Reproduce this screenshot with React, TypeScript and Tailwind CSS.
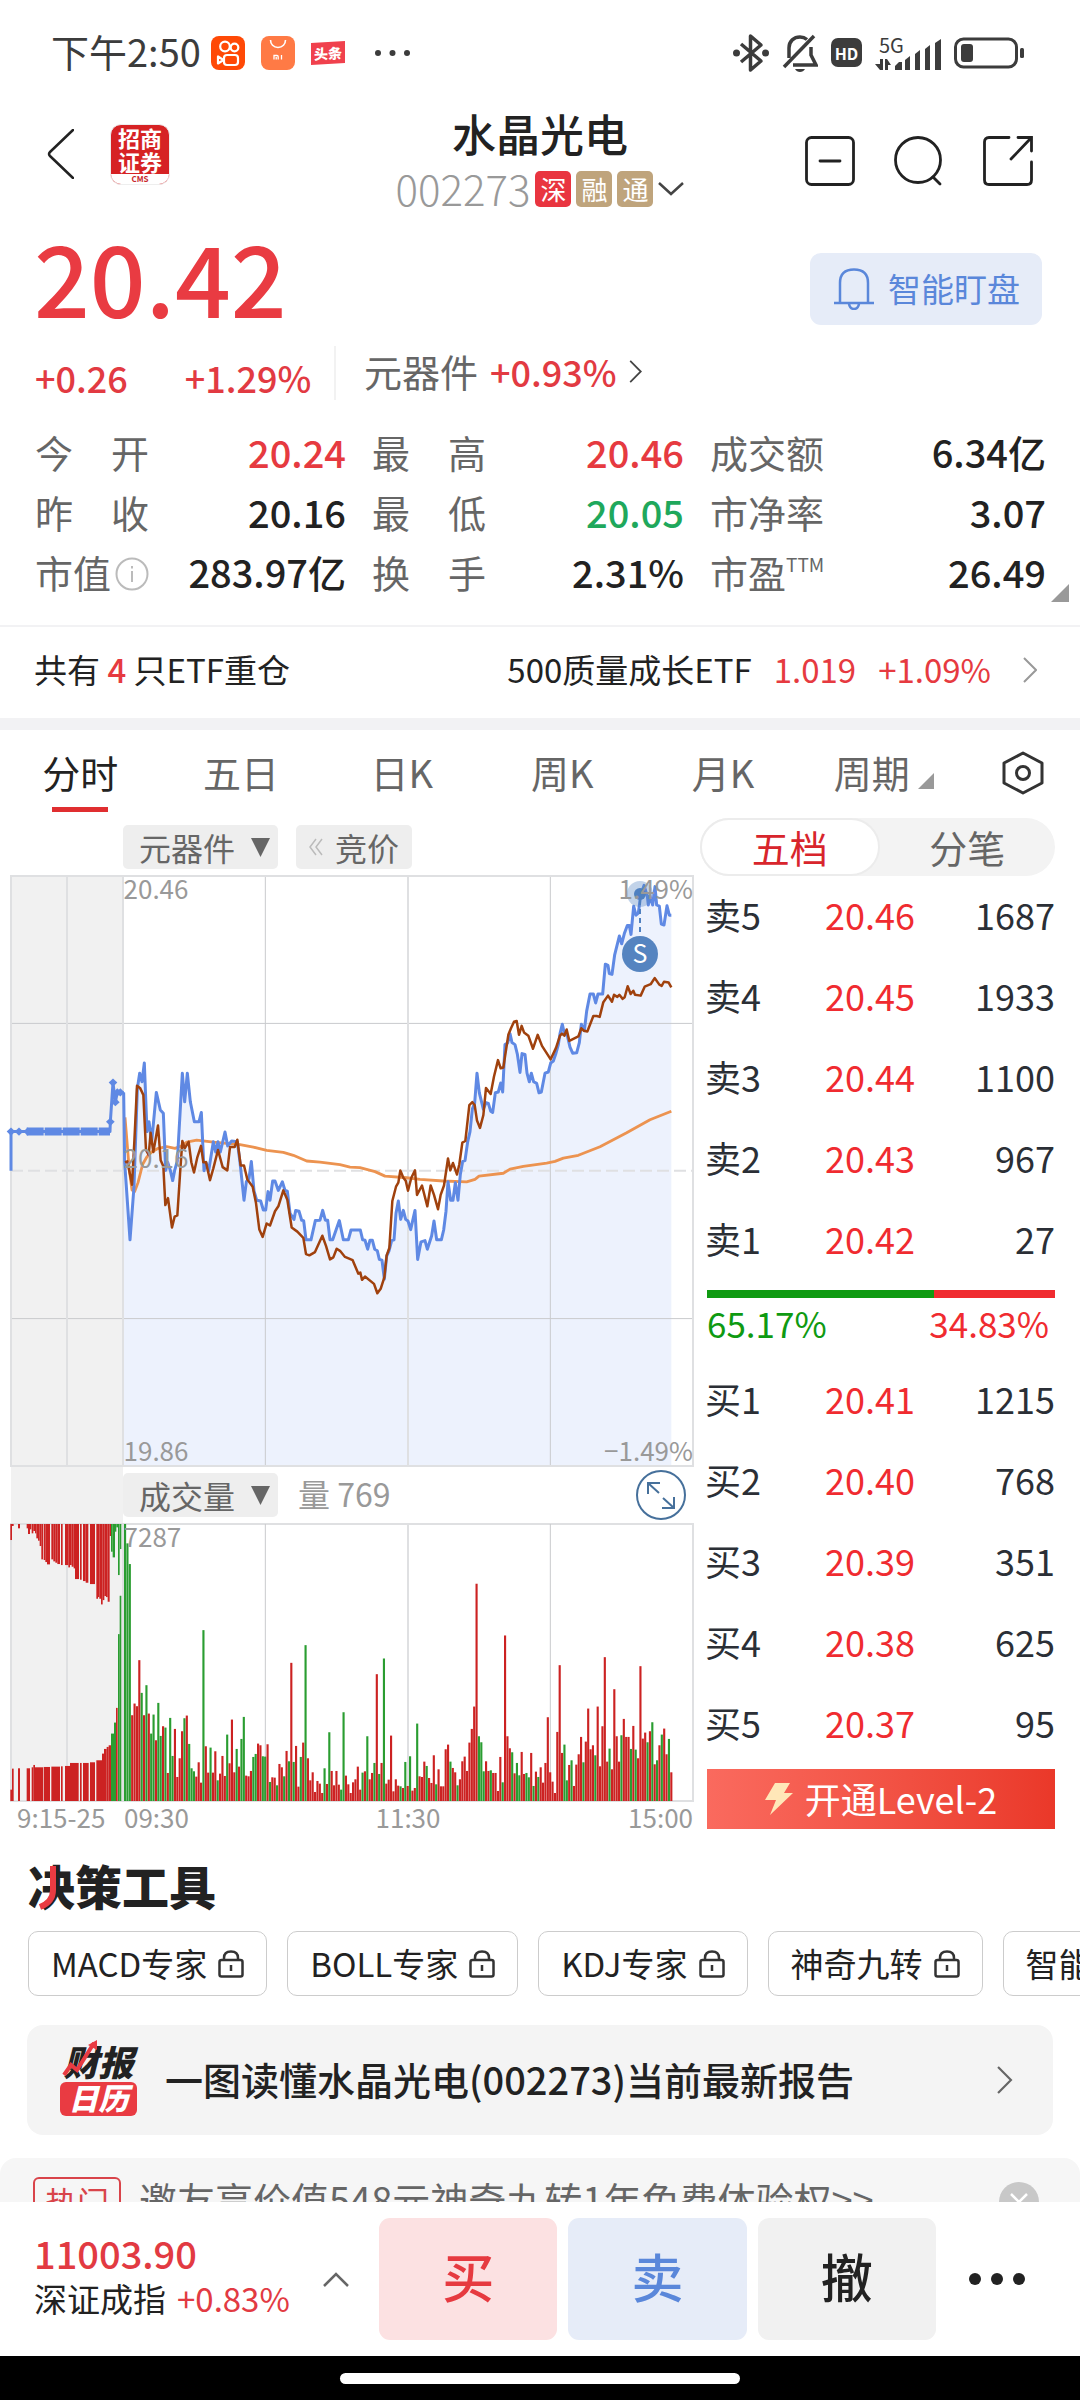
import { useState } from "react";
import clsx from "clsx";

const stats = [
  { label: "今　开", value: "20.24", tone: "text-[#e63a40]" },
  { label: "最　高", value: "20.46", tone: "text-[#e63a40]" },
  { label: "成交额", value: "6.34亿", tone: "text-[#222]" },
  { label: "昨　收", value: "20.16", tone: "text-[#222]" },
  { label: "最　低", value: "20.05", tone: "text-[#1fa85c]" },
  { label: "市净率", value: "3.07", tone: "text-[#222]" },
  { label: "市值", value: "283.97亿", tone: "text-[#222]", info: true },
  { label: "换　手", value: "2.31%", tone: "text-[#222]" },
  { label: "市盈", value: "26.49", tone: "text-[#222]", sup: "TTM" },
];

const periods = ["分时", "五日", "日K", "周K", "月K", "周期"];

const asks = [
  ["卖5", "20.46", "1687"],
  ["卖4", "20.45", "1933"],
  ["卖3", "20.44", "1100"],
  ["卖2", "20.43", "967"],
  ["卖1", "20.42", "27"],
];

const bids = [
  ["买1", "20.41", "1215"],
  ["买2", "20.40", "768"],
  ["买3", "20.39", "351"],
  ["买4", "20.38", "625"],
  ["买5", "20.37", "95"],
];

const tools = ["MACD专家", "BOLL专家", "KDJ专家", "神奇九转", "智能选股"];

// Both plots share the x axis: 33 is 9:15, 369 is 09:30, 2079 is 15:00.
const auctionLine =
  "33,761 33,665 330,665 331,641 339,545 346,593 352,569 371,569";

const priceLine =
  "371,569 374,740 390,930 402,800 412,560 419,522 426,543 433,497 441,665 447,641 455,690 469,569 481,612 490,620 497,760 503,740 511,760 518,785 524,760 532,737 547,522 554,592 562,522 571,592 583,641 597,641 604,618 612,761 618,740 626,761 640,690 647,715 654,690 661,715 675,666 683,700 695,688 712,690 720,740 732,833 739,788 747,780 754,738 762,810 770,833 782,835 790,857 797,857 804,812 810,833 818,786 825,786 835,809 847,788 855,809 862,811 870,865 882,880 887,858 897,860 905,882 911,883 918,930 933,930 946,883 960,882 968,858 976,882 983,882 990,930 998,930 1018,883 1030,930 1045,930 1053,906 1081,906 1088,930 1095,931 1103,953 1110,931 1117,931 1124,953 1132,957 1138,978 1146,980 1153,1026 1160,970 1167,957 1175,932 1182,930 1188,865 1195,835 1202,880 1210,858 1217,880 1224,884 1232,905 1245,858 1253,978 1263,935 1275,932 1282,953 1295,920 1302,884 1310,930 1324,930 1331,906 1338,860 1344,788 1352,833 1359,833 1366,790 1374,833 1381,770 1388,738 1395,736 1403,690 1410,665 1417,610 1424,595 1431,522 1438,570 1450,610 1458,594 1465,596 1472,615 1478,618 1486,570 1495,568 1502,546 1508,568 1515,452 1523,448 1530,425 1536,447 1545,452 1552,475 1560,520 1566,474 1575,476 1581,522 1588,543 1594,522 1601,543 1610,547 1617,570 1624,568 1635,522 1645,519 1652,497 1660,492 1668,473 1675,452 1680,425 1687,402 1693,425 1702,430 1710,458 1718,473 1730,472 1738,447 1744,402 1753,418 1760,370 1770,328 1780,328 1787,350 1794,328 1808,328 1816,255 1824,258 1828,278 1836,280 1844,232 1858,186 1865,205 1873,180 1882,160 1888,160 1893,182 1901,113 1908,135 1915,130 1922,86 1932,62 1942,88 1945,110 1950,88 1958,110 1965,65 1970,110 1978,113 1984,157 1992,159 2001,112 2008,135 2014,135";

const sectorLine =
  "375,740 382,738 390,770 396,795 403,690 411,553 420,558 430,575 438,710 446,722 452,668 460,715 474,650 482,735 490,750 496,845 504,828 516,900 524,873 532,870 540,770 547,688 554,706 566,690 574,740 582,765 592,728 603,700 610,740 618,740 630,784 640,755 654,710 668,752 682,760 690,703 704,703 712,685 722,748 732,748 742,782 758,800 768,840 778,905 788,923 800,890 810,895 825,860 835,848 850,809 862,832 875,900 892,910 910,925 918,965 928,968 945,960 967,920 978,945 990,978 1000,973 1010,952 1020,957 1035,972 1058,980 1075,1013 1081,1010 1086,1028 1095,1020 1122,1038 1132,1061 1142,1050 1153,1022 1160,968 1168,950 1177,835 1188,800 1195,790 1201,760 1210,778 1217,785 1224,810 1234,778 1245,760 1251,820 1266,797 1282,848 1292,797 1302,820 1314,855 1322,820 1332,797 1344,731 1351,760 1359,742 1371,770 1378,745 1387,692 1396,688 1408,600 1417,593 1424,600 1431,638 1440,656 1450,625 1458,558 1472,573 1482,530 1494,490 1502,510 1510,508 1525,428 1533,412 1542,396 1550,394 1557,428 1565,406 1572,422 1585,430 1599,462 1613,428 1626,455 1652,488 1668,460 1680,430 1686,425 1693,430 1700,415 1708,443 1735,432 1744,412 1752,418 1762,420 1780,382 1790,382 1799,384 1810,348 1824,332 1836,347 1842,330 1852,335 1858,330 1868,340 1874,336 1883,309 1892,328 1900,320 1905,330 1922,332 1934,310 1952,304 1964,289 1978,305 1985,308 1992,298 2006,300 2014,312";

const averageLine =
  "375,630 380,680 388,760 396,808 404,812 414,790 428,745 440,728 455,715 475,706 500,702 525,706 545,700 560,691 590,686 640,691 680,694 720,697 760,703 800,711 850,716 880,723 920,737 960,740 1020,746 1050,752 1080,753 1125,763 1155,774 1220,778 1260,782 1330,786 1400,788 1425,782 1437,774 1510,767 1530,757 1570,750 1640,742 1665,738 1690,730 1735,723 1800,702 1880,668 1950,636 2014,615";

const auctionDots = [
  [33, 665],
  [57, 665],
  [83, 665],
  [331, 641],
  [339, 545],
  [346, 593],
  [352, 569],
  [361, 569],
];

// One entry per minute: y of the bar's top, negative when the price fell.
const minuteTops = [
  -222, -280, -342, 795, 760, 768, 630, -728, 795, -705, 790, -850, -793, 870, -758, -857, 828, -832, 968, -803,
  -917, 836, 980, 924, 843, -804, 796, -881, -954, -963, 979, 936, 997, -540, 888, 967, -892, 967, 903, -990,
  970, 917, 977, -853, 939, 808, 966, -896, 949, -866, -800, 976, 978, 962, -920, -911, 880, 885, -918, -919,
  882, -995, 981, 982, -1005, 941, 951, -978, 902, -933, 638, -935, 887, 1009, -920, 877, -585, 924, 990, 966,
  1025, 992, 1000, 1028, -954, 1001, -846, 962, 1005, 962, 1003, -1018, -786, 976, 1002, 1028, 996, 987, 949, 1018,
  -967, 963, -858, 987, 968, -938, 672, -971, 938, -625, 1000, 988, 856, 1023, 987, 1006, -1008, 1013, -935, 1007,
  -918, 1021, 1013, -820, 978, 980, 934, -947, 983, 998, 915, -1002, 957, 1008, 1008, 897, 883, -934, 953, 966,
  -1005, 987, 933, 919, 962, 877, 836, 769, 401, -858, -876, -963, 933, 962, -960, 968, 968, 1022, 920, -996,
  556, 858, 894, -906, 969, -938, -975, 905, 971, -968, -981, 908, -1007, 964, -980, 951, 997, 938, 801, 966,
  994, 1028, 845, 645, 908, -883, -990, 944, -930, 1007, 943, 912, 860, -936, 874, 775, 897, 885, -915, 769,
  948, 828, 621, 934, -895, 957, 717, 858, 934, -855, 806, 860, 860, -896, 827, -898, 924, 648, 865, 847,
  -876, 843, -816, 942, -930, 885, -853, 835, 912, -866, 966,
];

// [x, width, y], negative y for green
const auctionUnmatched = [
  [31, 5, 270], [36, 5, 228], [54, 6, 235], [80, 4, 235], [84, 6, 252], [90, 4, 238], [95, 5, 250], [100, 5, 243],
  [105, 4, 250], [109, 5, 265], [114, 5, 272], [119, 5, 288], [124, 5, 328], [131, 5, 330], [136, 5, 336], [141, 9, 343],
  [154, 6, 328], [160, 6, 334], [166, 6, 338], [172, 8, 342], [183, 5, 345], [195, 10, 345], [205, 5, 352], [210, 5, 345],
  [215, 6, 350], [221, 4, 355], [225, 12, 387], [240, 5, 389], [249, 8, 393], [257, 8, 398], [270, 15, 402], [289, 5, 446],
  [294, 4, 441], [298, 5, 446], [303, 5, 463], [308, 5, 450], [313, 5, 438], [318, 5, 441], [323, 6, 455], [329, 4, 258],
  [333, 5, -305], [338, 7, -322], [345, 4, -245], [349, 5, -232], [354, 5, -375], [360, 4, -297],
];

const auctionMatched = [
  [31, 5, 1018], [36, 5, 955], [54, 6, 954], [80, 10, 954], [95, 5, 951], [100, 5, 944], [105, 24, 951], [131, 19, 950],
  [154, 26, 949], [183, 5, 948], [195, 15, 947], [210, 26, 938], [240, 5, 938], [249, 17, 938], [270, 15, 936], [289, 17, 930],
  [306, 6, 910], [312, 8, 896], [320, 6, 890], [326, 7, 885], [333, 9, -850], [342, 6, -817], [348, 5, 773], [354, 5, -552],
  [359, 5, -437],
];

const barFill = (y: number) => (y < 0 ? "#2a9d31" : "#cc2222");

function AppIcons() {
  return (
    <div className="ml-[10px] flex items-center gap-4">
      <svg className="h-[34px] w-[34px]" viewBox="0 0 34 34" fill="none" stroke="#fff" strokeWidth="2.2">
        <rect width="34" height="34" rx="8" fill="#ff4906" stroke="none" />
        <circle cx="14" cy="10.500" r="4.800" />
        <circle cx="23.500" cy="11.500" r="3.800" />
        <rect x="13" y="19" width="14" height="10" rx="3" />
        <path d="M12.500 24l-5.500-3.500v7z" strokeLinejoin="round" />
      </svg>
      <svg className="h-[34px] w-[34px]" viewBox="0 0 34 34" fill="none" stroke="#fff">
        <rect width="34" height="34" rx="8" fill="#ff7a45" stroke="none" />
        <path d="M9.500 4c0 4 3 7.500 7.500 7.500s7.500-3.500 7.500-7.500" strokeWidth="1.600" />
        <path d="M13 23.500v-4h3q1.200 0 1.200 1.200v2.800M15.200 21v2.500M20.500 19v4.500" strokeWidth="1.300" />
      </svg>
      <span className="flex h-[22px] w-[34px] -skew-y-3 items-center justify-center bg-[#f0414d] text-[14px] leading-none font-black text-white">
        头条
      </span>
    </div>
  );
}

function StatusIcons() {
  return (
    <div className="flex items-center gap-[13px] text-[#3c3c3c]">
      <svg className="h-[40px] w-[36px]" viewBox="0 0 36 40" fill="none" stroke="currentColor" strokeWidth="3.500">
        <path d="M8 11l20 17-10.500 9V3L28 12 8 29" strokeLinejoin="round" />
        <circle cx="3.500" cy="20" r="3.500" fill="currentColor" stroke="none" />
        <circle cx="32.500" cy="20" r="3.500" fill="currentColor" stroke="none" />
      </svg>
      <svg className="h-[40px] w-[36px]" viewBox="0 0 36 40" fill="none" stroke="currentColor" strokeWidth="3.500">
        <path d="M7 25V15C7 8 12 4 18 4c3 0 5 .8 7 2.500M29 14v8l5 10H11" />
        <path d="M2 34L32 3" />
        <path d="M13 36h10c-1 2-3 3-5 3s-4-1-5-3z" fill="currentColor" stroke="none" />
      </svg>
      <span className="flex h-[29px] w-[31px] items-center justify-center rounded-[7px] bg-[#3c3c3c] text-[16px] leading-none font-bold text-white">
        HD
      </span>
      <div className="relative h-[36px] w-[66px]">
        <span className="absolute top-0 left-1 text-[20px] leading-[20px]">5G</span>
        <svg className="h-full w-full" viewBox="0 0 66 36" fill="currentColor">
          <path d="M5 24h3v11H5l-5-6h5zM10 24h2l4 6h-3v5h-3zM20 35v-4l4-4h3v8zM30 35V25l5-4v14zM40 35V19l5-4v20zM50 35V14l5-4v25zM60 35V8l6-4v31z" />
        </svg>
      </div>
      <svg className="h-[32px] w-[70px]" viewBox="0 0 70 32">
        <rect x="1.500" y="2" width="61" height="28" rx="8" fill="none" stroke="currentColor" strokeWidth="3" />
        <rect x="7" y="7" width="12" height="18" rx="3" fill="currentColor" />
        <rect x="66" y="11" width="4" height="10" rx="1.500" fill="currentColor" />
      </svg>
    </div>
  );
}

function Chevron({ className }: { className?: string }) {
  return (
    <svg className={className} viewBox="0 0 14 26" fill="none" stroke="currentColor" strokeWidth="2">
      <path d="M1 1l12 12L1 25" />
    </svg>
  );
}

function Header() {
  return (
    <header className="grid grid-cols-[1fr_auto_1fr] items-center pr-[47px] pl-[47px]">
      <div className="flex items-center gap-9 pb-3.5">
        <button type="button" aria-label="返回">
          <svg className="h-[50px] w-[27px]" viewBox="0 0 27 50" fill="none" stroke="#222" strokeWidth="2.500">
            <path d="M26 1L3 23q-2 2 0 4l23 22" strokeLinecap="round" />
          </svg>
        </button>
        <div className="flex h-[61px] w-[60px] flex-col overflow-hidden rounded-[11px] border border-[#eee] bg-[#d62224] text-center text-white">
          <span className="text-[22px] leading-[24px] font-bold">
            招商
            <br />
            证券
          </span>
          <span className="mt-auto bg-white text-[8px] leading-[10px] font-bold text-[#c8282a]">CMS</span>
        </div>
      </div>

      <div className="flex flex-col items-center">
        <h1 className="text-[44px] leading-[56px] font-medium text-[#222]">水晶光电</h1>
        <div className="flex h-14 items-center gap-[5px]">
          <span className="pb-0.5 text-[42px] leading-[54px] font-light text-[#999]">002273</span>
          <span className="flex h-9 w-9 items-center justify-center rounded-[5px] bg-[#e93540] text-[26px] leading-none text-white">深</span>
          <span className="flex h-9 w-9 items-center justify-center rounded-[5px] bg-[#bfa47c] text-[26px] leading-none text-white">融</span>
          <span className="flex h-9 w-9 items-center justify-center rounded-[5px] bg-[#bfa47c] text-[26px] leading-none text-white">通</span>
          <svg className="h-[14px] w-[26px]" viewBox="0 0 26 14" fill="none" stroke="#444" strokeWidth="2.500">
            <path d="M1 1l12 11L25 1" />
          </svg>
        </div>
      </div>

      <div className="flex items-center justify-end gap-[39px] text-[#222]">
        <button type="button" aria-label="移出自选">
          <svg className="h-[50px] w-[50px]" viewBox="0 0 50 50" fill="none" stroke="currentColor" strokeWidth="2.800" strokeLinecap="round">
            <rect x="1.500" y="1.500" width="47" height="47" rx="5" />
            <path d="M15 25h20" />
          </svg>
        </button>
        <button type="button" aria-label="搜索">
          <svg className="h-[50px] w-[50px]" viewBox="0 0 50 50" fill="none" stroke="currentColor" strokeWidth="2.800" strokeLinecap="round">
            <circle cx="24" cy="24" r="22.500" />
            <path d="M39 41l7 7" />
          </svg>
        </button>
        <button type="button" aria-label="分享">
          <svg className="h-[50px] w-[50px]" viewBox="0 0 50 50" fill="none" stroke="currentColor" strokeWidth="2.800" strokeLinecap="round">
            <path d="M26 1.500H6Q1.500 1.500 1.500 6v38q0 4.500 4.500 4.500h38q4.500 0 4.500-4.500V26" />
            <path d="M35 1.500h13.500V15M48.500 1.500L28 23" />
          </svg>
        </button>
      </div>
    </header>
  );
}

function Quote() {
  return (
    <section>
      <div className="flex items-start justify-between pr-[38px] pl-[34px]">
        <strong className="text-[98px] leading-[116px] font-medium text-[#e93b42]">20.42</strong>
        <button
          type="button"
          className="mt-9 flex h-[72px] items-center gap-[14px] rounded-[11px] bg-[#e6ecf8] pr-[22px] pl-6 text-[33px] text-[#5a87da]"
        >
          <svg className="h-[42px] w-10" viewBox="0 0 40 42" fill="none" stroke="currentColor" strokeWidth="2.500">
            <path d="M0 35h40M6 35V15Q6 1.500 20 1.500T34 15v20M15 36q1 5 5 5t5-5" />
          </svg>
          智能盯盘
        </button>
      </div>

      <div className="mt-[13px] flex h-[54px] items-center pl-[35px] text-[36px] leading-[50px] text-[#e23a42]">
        <div className="flex w-[299px] gap-[57px] pt-2 font-medium">
          <span>+0.26</span>
          <span>+1.29%</span>
        </div>
        <a href="#sector" className="flex h-full items-center gap-3 border-l-2 border-[#f2f2f2] pb-1 pl-7">
          <span className="text-[38px] text-[#666]">元器件</span>
          <span className="font-medium">+0.93%</span>
          <Chevron className="h-[23px] w-[13px] text-[#444]" />
        </a>
      </div>

      <div className="relative mt-[22px]">
        <dl className="grid grid-cols-[311fr_312fr_336fr] gap-x-[26px] pr-[34px] pl-[35px] text-[38px] leading-[60px]">
          {stats.map((s) => (
            <div key={s.label} className="flex justify-between whitespace-nowrap">
              <dt className="flex text-[#666]">
                {s.label}
                {s.sup && <sup className="top-0 pt-2 text-[19px] leading-[28px]">{s.sup}</sup>}
                {s.info && (
                  <svg className="mt-[15px] ml-1 h-[34px] w-[34px]" viewBox="0 0 34 34" fill="none" stroke="#bbb" strokeWidth="2">
                    <circle cx="17" cy="17" r="15.500" />
                    <path d="M17 14v11M17 9v2.500" />
                  </svg>
                )}
              </dt>
              <dd className={clsx("font-medium", s.tone)}>{s.value}</dd>
            </div>
          ))}
        </dl>
        <svg className="absolute right-[11px] bottom-0 h-[18px] w-[18px]" viewBox="0 0 18 18">
          <path d="M18 0v18H0z" fill="#999" />
        </svg>
      </div>

      <a
        href="#etf"
        className="mt-[23px] flex h-[93px] items-center border-t-2 border-[#f2f2f4] pr-[43px] pb-1.5 pl-[34px] text-[33px] text-[#222]"
      >
        <span className="mr-auto">
          共有 <b className="font-medium text-[#e63a40]">4</b> 只ETF重仓
        </span>
        <span>500质量成长ETF</span>
        <span className="ml-[22px] text-[#e63a40]">1.019</span>
        <span className="ml-[22px] text-[#e63a40]">+1.09%</span>
        <Chevron className="ml-8 h-[26px] w-[14px] text-[#999]" />
      </a>
      <div className="h-3 bg-[#f2f2f4]" />
    </section>
  );
}

function Periods() {
  const [active, setActive] = useState("分时");

  return (
    <nav className="flex h-[82px] items-stretch pr-9 text-[38px] text-[#666]" aria-label="周期">
      {periods.map((p) => (
        <button
          key={p}
          type="button"
          onClick={() => setActive(p)}
          className={clsx("relative flex flex-1 items-center justify-center", active === p && "text-[#222]")}
        >
          {p}
          {p === "周期" && (
            <svg className="mt-5 ml-2 h-4 w-4" viewBox="0 0 16 16">
              <path d="M16 0v16H0z" fill="#999" />
            </svg>
          )}
          {active === p && <span className="absolute bottom-0 h-[5px] w-14 bg-[#e02e30]" />}
        </button>
      ))}
      <button type="button" aria-label="设置" className="ml-[38px] pt-1">
        <svg className="h-[44px] w-[42px]" viewBox="0 0 42 44" fill="none" stroke="#333" strokeWidth="3">
          <path d="M21 2l19 10v20L21 42 2 32V12z" strokeLinejoin="round" />
          <circle cx="21" cy="22" r="6.500" />
        </svg>
      </button>
    </nav>
  );
}

function Picker({ id, label, option }: { id: string; label: string; option: string }) {
  return (
    <div className="relative">
      <label htmlFor={id} className="sr-only">
        {label}
      </label>
      <select
        id={id}
        className="block h-11 appearance-none rounded-[5px] bg-[#eee] pr-[42px] pl-4 text-[32px] leading-[44px] text-[#666]"
      >
        <option>{option}</option>
      </select>
      <svg className="pointer-events-none absolute top-[13px] right-2 h-[19px] w-[19px]" viewBox="0 0 19 19">
        <path d="M0 0h19L9.500 19z" fill="#666" />
      </svg>
    </div>
  );
}

function PriceChart() {
  return (
    <div className="relative mr-[7px] ml-[11px] h-[590px] text-[26px] leading-[28px] text-[#999]">
      <svg className="h-full w-full overflow-visible" viewBox="33 39 2046 1445" preserveAspectRatio="none" fill="none">
        <rect x="33" y="39" width="336" height="1445" fill="#f1f1f1" />
        <polygon points={`371,1484 ${priceLine} 2014,1484`} fill="#edf2fd" />
        <g stroke="#c9cacd" strokeWidth="1">
          <path d="M33 400H2079M33 1123H2079M796 39V1484M1651 39V1484" vectorEffect="non-scaling-stroke" />
        </g>
        <g stroke="#dfe0e2" strokeWidth="2">
          <path d="M33 39H2079V1484H33zM201 39V1484M369 39V1484M1224 39V1484" vectorEffect="non-scaling-stroke" />
          <path d="M33 761H2079" strokeDasharray="12 5" vectorEffect="non-scaling-stroke" />
        </g>
        <g strokeLinejoin="round">
          <polyline points={averageLine} stroke="#ec9350" strokeWidth="2.800" vectorEffect="non-scaling-stroke" />
          <polyline points={auctionLine} stroke="#5f89e4" strokeWidth="3" vectorEffect="non-scaling-stroke" />
          <polyline points={priceLine} stroke="#5f89e4" strokeWidth="3" vectorEffect="non-scaling-stroke" />
          <polyline points={sectorLine} stroke="#a0410d" strokeWidth="2.500" vectorEffect="non-scaling-stroke" />
        </g>
        <path d="M80 665H330" stroke="#5f89e4" strokeWidth="8" strokeDasharray="17 1" vectorEffect="non-scaling-stroke" />
        {auctionDots.map(([x, y]) => (
          <path key={`${x}-${y}`} d={`M${x - 13} ${y}l13-10 13 10-13 10z`} fill="#5f89e4" />
        ))}
      </svg>
      {/* trade marker */}
      <svg className="absolute top-0 left-[92.2%] h-[100px] w-10 -translate-x-1/2" viewBox="0 0 40 100">
        <circle cx="20" cy="18" r="13" fill="#4f80c0" opacity=".35" />
        <circle cx="20" cy="18" r="6" fill="#4f80c0" />
        <path d="M20 24V60" stroke="#4f80c0" strokeWidth="2" strokeDasharray="5 4" />
        <circle cx="20" cy="78" r="18" fill="#5584c0" />
        <text x="20" y="87" textAnchor="middle" fontSize="25" fill="#fff">
          S
        </text>
      </svg>
      <span className="absolute -top-0.5 left-[16.5%]">20.46</span>
      <span className="absolute -top-0.5 right-0">1.49%</span>
      <span className="absolute top-[45.2%] left-[16.5%]">20.16</span>
      <span className="absolute bottom-0.5 left-[16.5%]">19.86</span>
      <span className="absolute right-0 bottom-0.5">−1.49%</span>
    </div>
  );
}

function VolumeChart() {
  return (
    <div className="mr-[7px] ml-[11px] text-[26px] leading-[32px] text-[#999]">
      <div className="relative h-[277px]">
        <svg className="h-full w-full overflow-visible" viewBox="33 222 2046 830" preserveAspectRatio="none">
          <rect x="33" y="222" width="336" height="830" fill="#f1f1f1" />
          <g stroke="#dfe0e2" strokeWidth="2" fill="none">
            <path d="M33 222H2079V1052H33zM201 222V1052M369 222V1052M1224 222V1052" vectorEffect="non-scaling-stroke" />
          </g>
          <path d="M796 222V1052M1651 222V1052" stroke="#c9cacd" strokeWidth="1" vectorEffect="non-scaling-stroke" />
          {auctionUnmatched.map(([x, w, y]) => (
            <rect key={x} x={x} y="222" width={w} height={Math.abs(y) - 222} fill={barFill(y)} />
          ))}
          {auctionMatched.map(([x, w, y]) => (
            <rect key={x} x={x} y={Math.abs(y)} width={w} height={1052 - Math.abs(y)} fill={barFill(y)} />
          ))}
          {minuteTops.map((y, i) => (
            <rect key={i} x={372 + i * 7.125} y={Math.abs(y)} width="6.400" height={1052 - Math.abs(y)} fill={barFill(y)} />
          ))}
        </svg>
        <span className="absolute -top-1 left-[16.5%]">7287</span>
      </div>
      <div className="grid grid-cols-[112fr_285fr_285fr]">
        <span className="pl-[6px]">9:15-25</span>
        <span className="pl-px">09:30</span>
        <span className="flex justify-between">
          <span className="-translate-x-1/2">11:30</span>
          <span>15:00</span>
        </span>
      </div>
    </div>
  );
}

function Levels({ rows, caption }: { rows: string[][]; caption: string }) {
  return (
    <table className="w-full text-[36px] leading-[48px] text-[#2b2f36]">
      <caption className="sr-only">{caption}</caption>
      <tbody>
        {rows.map(([name, price, count]) => (
          <tr key={name} className="h-[81px]">
            <th scope="row" className="w-[27%] pb-1.5 text-left font-normal">
              {name}
            </th>
            <td className="w-[33%] pb-1.5 text-right text-[#f02b30]">{price}</td>
            <td className="pb-1.5 text-right">{count}</td>
          </tr>
        ))}
      </tbody>
    </table>
  );
}

function OrderBook() {
  const [tab, setTab] = useState("五档");

  return (
    <aside className="pt-1.5 pr-[25px]">
      <div className="flex h-[58px] rounded-full bg-[#f3f3f3] text-[38px]">
        {["五档", "分笔"].map((t) => (
          <button
            key={t}
            type="button"
            onClick={() => setTab(t)}
            className={clsx(
              "flex-1 rounded-full leading-[50px]",
              tab === t ? "border-2 border-[#ececec] bg-white text-[#d8252c]" : "text-[#666]",
            )}
          >
            {t}
          </button>
        ))}
      </div>
      <div className="pl-[5px]">
        <Levels rows={asks} caption="卖盘" />
        <div className="mt-[9px] ml-0.5 flex h-2">
          <span className="w-[65.17%] bg-[#0f9a12]" />
          <span className="flex-1 bg-[#f02b30]" />
        </div>
        <div className="mb-3 flex justify-between pr-1.5 pl-0.5 text-[35px] leading-[50px]">
          <span className="text-[#0f9a12]">65.17%</span>
          <span className="text-[#f02b30]">34.83%</span>
        </div>
        <Levels rows={bids} caption="买盘" />
        <button
          type="button"
          className="mt-1 ml-0.5 flex h-[60px] w-[calc(100%-2px)] items-center justify-center gap-3 bg-gradient-to-r from-[#fa6a5e] to-[#ea3829] text-[36px] leading-[56px] text-white"
        >
          <svg className="h-8 w-7" viewBox="0 0 28 32">
            <path d="M10 0h15l-6 10h9L5 32l6-15H0z" fill="#ffe7b8" />
          </svg>
          <span className="pb-0.5">开通Level-2</span>
        </button>
      </div>
    </aside>
  );
}

function DecisionTools() {
  return (
    <section className="mt-6">
      <h2 className="relative pl-7 text-[47px] leading-[56px] font-black text-[#222]">
        决策工具
        <svg className="absolute top-[9px] left-[38px] h-[44px] w-5" viewBox="0 0 20 44" fill="none">
          <path d="M15 0v24Q15 36 2 41" stroke="#e93b42" strokeWidth="6" />
        </svg>
      </h2>
      <div className="mt-[18px] flex gap-5 overflow-hidden pl-7">
        {tools.map((t) => (
          <button
            key={t}
            type="button"
            className="flex h-[65px] shrink-0 items-center gap-[11px] rounded-[10px] border border-[#ccc] px-[22px] text-[33px] leading-[58px] text-[#222]"
          >
            <span className="pb-0.5">{t}</span>
            <svg className="h-7 w-[26px]" viewBox="0 0 26 28" fill="none" stroke="#333" strokeWidth="2.500">
              <rect x="1.500" y="10" width="23" height="16.500" rx="2" />
              <path d="M6 10V8Q6 1.500 13 1.500T20 8v2M13 15v6" />
            </svg>
          </button>
        ))}
      </div>
      <a href="#report" className="mx-[27px] mt-[29px] flex h-[110px] items-center rounded-[16px] bg-[#f4f4f4] pr-10 pl-[33px]">
        <span className="relative flex w-[77px] flex-col text-center font-black italic">
          <span className="text-[35px] leading-[34px] text-[#222]">财报</span>
          <span className="mt-1 h-[34px] rounded-[6px] bg-[#e93b42] text-[30px] leading-[30px] text-white">日历</span>
          <svg className="absolute -top-1 left-0.5 h-[38px] w-[38px]" viewBox="0 0 38 38" fill="none">
            <path d="M2 35l7-10 6 5L32 3" stroke="#e93b42" strokeWidth="4" />
            <path d="M26 5l9-5v10z" fill="#e93b42" />
          </svg>
        </span>
        <span className="ml-7 pb-1 text-[38px] font-medium text-[#222]">一图读懂水晶光电(002273)当前最新报告</span>
        <Chevron className="ml-auto h-[28px] w-[17px] text-[#666]" />
      </a>
    </section>
  );
}

function Promo() {
  return (
    <section className="mt-[23px] flex h-11 items-start overflow-hidden rounded-t-[16px] bg-[#f6f6f6]">
      <span className="mt-[19px] ml-[33px] rounded-[6px] border-2 border-[#d9444a] px-[10px] text-[32px] leading-[44px] text-[#d9444a]">
        热门
      </span>
      <span className="mt-[14px] ml-[18px] text-[38px] leading-[54px] whitespace-nowrap text-[#666]">
        邀友享价值548元神奇九转1年免费体验权&gt;&gt;
      </span>
      <button type="button" aria-label="关闭" className="mt-6 mr-[41px] ml-auto">
        <svg className="h-10 w-10" viewBox="0 0 40 40">
          <circle cx="20" cy="20" r="20" fill="#c8c8c8" />
          <path d="M12 12l16 16M28 12L12 28" stroke="#fff" strokeWidth="2.500" />
        </svg>
      </button>
    </section>
  );
}

function TradeBar() {
  return (
    <footer>
      <div className="flex h-[154px] items-center pr-[55px] pl-[34px]">
        <div className="flex-1 pb-2">
          <div className="text-[38px] leading-[46px] font-medium text-[#e23a42]">11003.90</div>
          <div className="flex items-center text-[33px] leading-[44px] whitespace-nowrap text-[#222]">
            深证成指 <span className="ml-[11px] text-[#e23a42]">+0.83%</span>
          </div>
        </div>
        <svg className="mr-[30px] h-[15px] w-[26px]" viewBox="0 0 26 15" fill="none" stroke="#666" strokeWidth="2.500">
          <path d="M1 14L13 2l12 12" />
        </svg>
        <div className="grid w-[557px] grid-cols-3 gap-[11px] text-[52px] leading-[110px] font-medium">
          <button type="button" className="h-[122px] rounded-[11px] bg-[#fce1e2] pb-1.5 text-[#e63a40]">
            买
          </button>
          <button type="button" className="h-[122px] rounded-[11px] bg-[#e6ecf8] pb-1.5 text-[#5a87da]">
            卖
          </button>
          <button type="button" className="h-[122px] rounded-[11px] bg-[#f1f1f1] pb-1.5 text-[#222]">
            撤
          </button>
        </div>
        <button type="button" aria-label="更多" className="ml-[33px]">
          <svg className="h-3 w-14" viewBox="0 0 56 12" fill="#222">
            <circle cx="6" cy="6" r="6" />
            <circle cx="28" cy="6" r="6" />
            <circle cx="50" cy="6" r="6" />
          </svg>
        </button>
      </div>
      <div className="flex h-11 items-center justify-center bg-black">
        <span className="h-[11px] w-[37%] rounded-full bg-white" />
      </div>
    </footer>
  );
}

export default function App() {
  return (
    <div className="bg-white font-['Noto_Sans_CJK_SC',sans-serif]">
      <div className="flex h-[105px] items-center justify-between pr-[56px] pl-[51px] text-[#3c3c3c]">
        <div className="flex items-center">
          <span className="pb-1 text-[38px] leading-[50px]">下午2:50</span>
          <AppIcons />
          <svg className="ml-[30px] h-[6px] w-[35px]" viewBox="0 0 35 6" fill="currentColor">
            <circle cx="3" cy="3" r="3" />
            <circle cx="17.500" cy="3" r="3" />
            <circle cx="32" cy="3" r="3" />
          </svg>
        </div>
        <StatusIcons />
      </div>
      <Header />
      <Quote />
      <Periods />
      <main className="grid grid-cols-[700fr_380fr]">
        <div className="min-w-0">
          <div className="flex gap-[18px] pt-[13px] pb-[7px] pl-[123px]">
            <Picker id="overlay" label="叠加" option="元器件" />
            <button type="button" className="flex h-11 items-center gap-3 rounded-[5px] bg-[#eee] px-[13px] text-[32px] leading-[40px] text-[#666]">
              <svg className="h-[18px] w-[14px]" viewBox="0 0 14 18" fill="none" stroke="#bbb" strokeWidth="1.500">
                <path d="M7 1L1 9l6 8M13 1L7 9l6 8" />
              </svg>
              竞价
            </button>
          </div>
          <PriceChart />
          <div className="ml-[11px] flex h-[58px] items-center pr-[14px]">
            <div className="h-full w-28 bg-[#f1f1f1]" />
            <Picker id="indicator" label="指标" option="成交量" />
            <span className="ml-5 pb-1 text-[32px] leading-[40px] text-[#999]">量 769</span>
            <button type="button" aria-label="全屏" className="ml-auto">
              <svg className="h-[50px] w-[50px]" viewBox="0 0 50 50" fill="none" stroke="#46709b" strokeWidth="2">
                <circle cx="25" cy="25" r="24" />
                <path d="M23 23L12 13M12 24V13h12M27 28l11 10M38 27v11H26" />
              </svg>
            </button>
          </div>
          <VolumeChart />
        </div>
        <OrderBook />
      </main>
      <DecisionTools />
      <Promo />
      <TradeBar />
    </div>
  );
}
